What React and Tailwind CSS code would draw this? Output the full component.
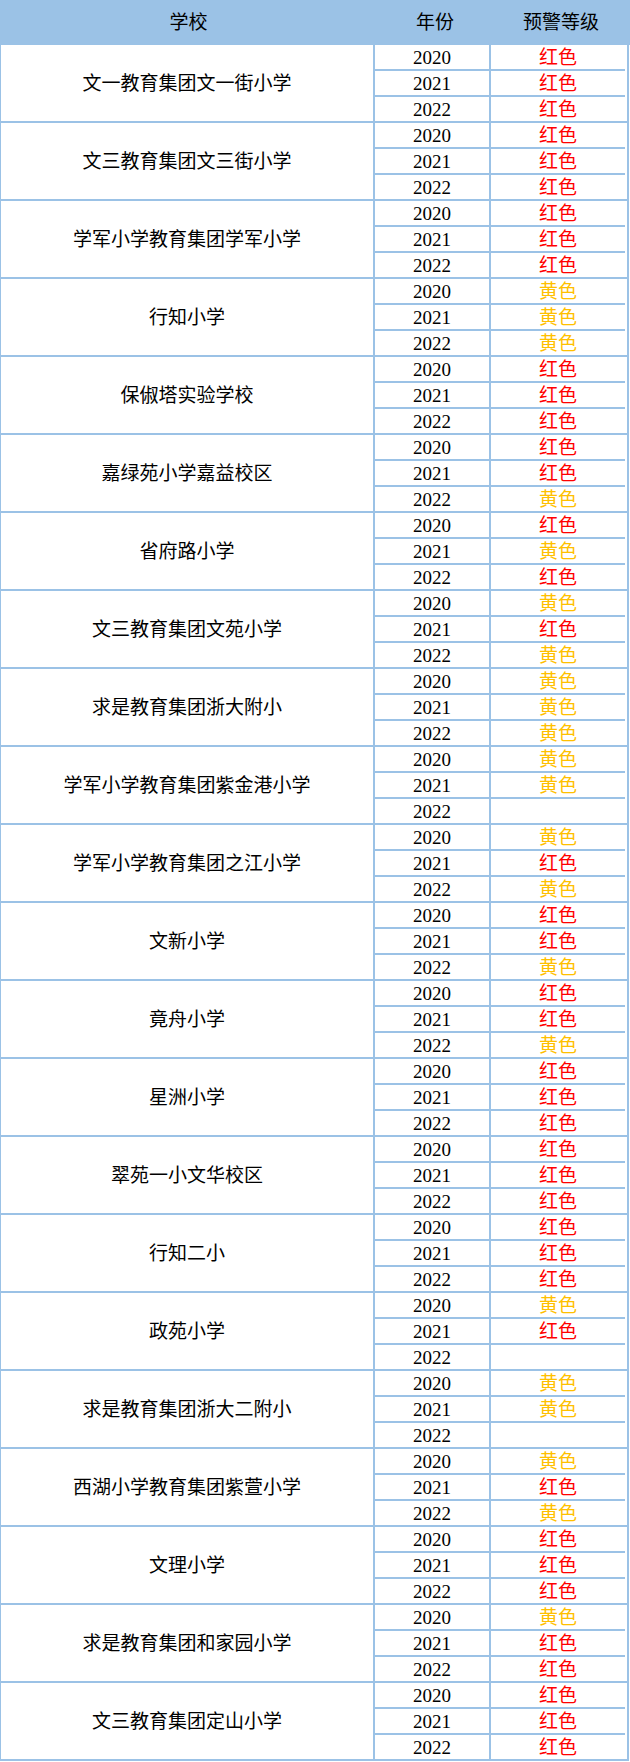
const R = "红色";
const Y = "黄色";

// Each school has three years (2020–2022) and a warning level per year.
const SCHOOLS = [
  ["文一教育集团文一街小学", [R, R, R]],
  ["文三教育集团文三街小学", [R, R, R]],
  ["学军小学教育集团学军小学", [R, R, R]],
  ["行知小学", [Y, Y, Y]],
  ["保俶塔实验学校", [R, R, R]],
  ["嘉绿苑小学嘉益校区", [R, R, Y]],
  ["省府路小学", [R, Y, R]],
  ["文三教育集团文苑小学", [Y, R, Y]],
  ["求是教育集团浙大附小", [Y, Y, Y]],
  ["学军小学教育集团紫金港小学", [Y, Y, ""]],
  ["学军小学教育集团之江小学", [Y, R, Y]],
  ["文新小学", [R, R, Y]],
  ["竟舟小学", [R, R, Y]],
  ["星洲小学", [R, R, R]],
  ["翠苑一小文华校区", [R, R, R]],
  ["行知二小", [R, R, R]],
  ["政苑小学", [Y, R, ""]],
  ["求是教育集团浙大二附小", [Y, Y, ""]],
  ["西湖小学教育集团紫萱小学", [Y, R, Y]],
  ["文理小学", [R, R, R]],
  ["求是教育集团和家园小学", [Y, R, R]],
  ["文三教育集团定山小学", [R, R, R]],
];

const YEARS = ["2020", "2021", "2022"];

function Group({ name, levels }) {
  return (
    <div className="flex w-[629px] border-l border-r-2 border-b-2 border-[#9bc2e6]">
      <div className="flex w-[374px] shrink-0 items-center justify-center border-r-2 border-[#9bc2e6] text-black">
        {name}
      </div>
      <div className="flex flex-col">
        {YEARS.map((y, i) => (
          <div
            key={y}
            className={
              "flex h-[24px] " +
              (i < 2 ? "box-content border-b-2 border-[#9bc2e6]" : "")
            }
          >
            <div className="flex w-[114px] box-content items-center justify-center border-r-2 border-[#9bc2e6] text-black">
              {y}
            </div>
            <div
              className={
                "flex w-[134px] items-center justify-center " +
                (levels[i] === R ? "text-[#ff0000]" : "text-[#ffc000]")
              }
            >
              {levels[i]}
            </div>
          </div>
        ))}
      </div>
    </div>
  );
}

export default function App() {
  return (
    <div className="w-[630px] bg-white font-['Liberation_Serif','Noto_Sans_CJK_SC',serif] text-[19px] leading-none">
      <div className="flex h-[45px] w-[630px] items-center bg-[#9bc2e6] text-black">
        <div className="w-[377px] text-center">学校</div>
        <div className="w-[116px] text-center">年份</div>
        <div className="w-[136px] text-center">预警等级</div>
      </div>
      {SCHOOLS.map(([name, levels]) => (
        <Group key={name} name={name} levels={levels} />
      ))}
    </div>
  );
}
